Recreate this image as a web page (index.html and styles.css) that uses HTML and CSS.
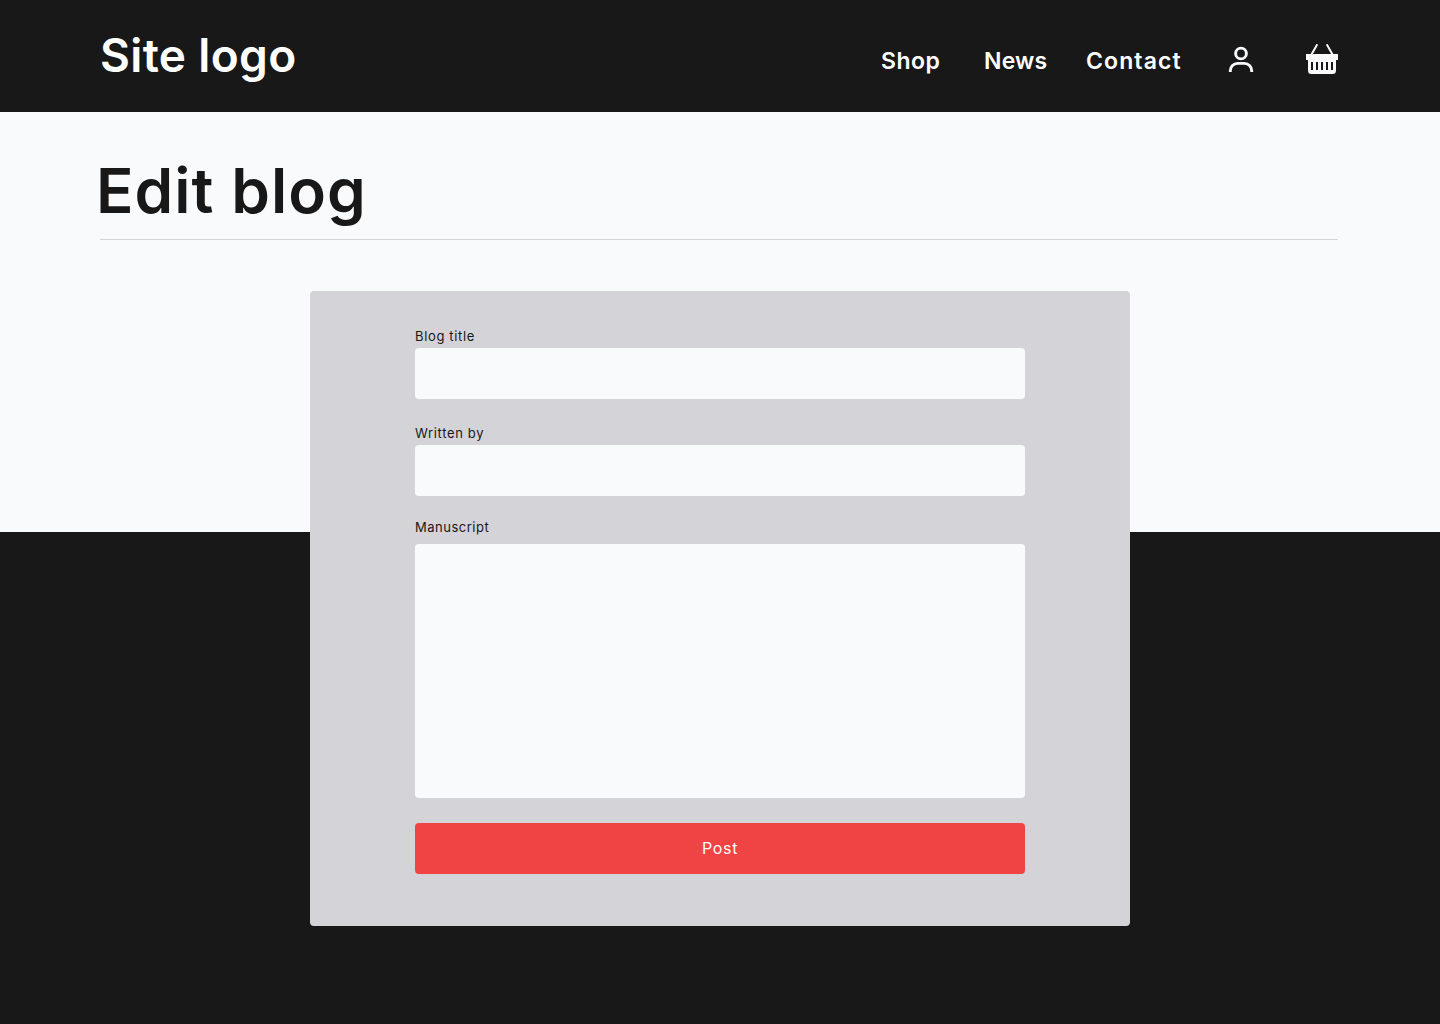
FILE: index.html
```html
<!DOCTYPE html>
<html lang="en">
<head>
<meta charset="utf-8">
<title>Edit blog</title>
<link rel="stylesheet" href="styles.css">
</head>
<body>
<header class="header">
  <a class="logo">Site logo</a>
  <nav class="nav">
    <a class="nav-link shop">Shop</a>
    <a class="nav-link news">News</a>
    <a class="nav-link contact">Contact</a>
    <svg class="icon user" width="26" height="28" viewBox="0 0 26 28" fill="none" stroke="#f9fafc" stroke-width="2.9">
      <circle cx="13" cy="8.5" r="5.4"/>
      <path d="M2.300 27v-1.300a7.300 7.300 0 0 1 7.300-7.300h6.800a7.300 7.300 0 0 1 7.300 7.300V27"/>
    </svg>
    <svg class="icon basket" width="32" height="30" viewBox="0 0 32 30">
      <path d="M11.3.3 5.2 11M20.7.3 26.8 11" fill="none" stroke="#f9fafc" stroke-width="2"/>
      <path d="M0 10h32v6h-2v10.500a3.500 3.500 0 0 1-3.500 3.500h-21A3.500 3.500 0 0 1 2 26.500V16H0z" fill="#f9fafc"/>
      <path d="M6 18v8M11 18v8M16 18v8M21 18v8M26 18v8" stroke="#181818" stroke-width="2"/>
    </svg>
  </nav>
</header>
<main class="main">
  <h1 class="title"><span class="title-text">Edit blog</span></h1>
  <form class="card">
    <label class="label" for="blog-title">Blog title</label>
    <input class="field" id="blog-title" type="text">
    <label class="label author" for="author">Written by</label>
    <input class="field" id="author" type="text">
    <label class="label manuscript" for="manuscript">Manuscript</label>
    <textarea class="field area" id="manuscript"></textarea>
    <button class="post" type="button">Post</button>
  </form>
</main>
</body>
</html>
```
FILE: styles.css
```css
* { box-sizing: border-box; }
body {
  margin: 0;
  height: 1024px;
  overflow: hidden;
  background: linear-gradient(#f9fafc 532px, #181818 532px);
  color: #181818;
  font-family: Inter, "Liberation Sans", sans-serif;
}
.header {
  height: 112px;
  padding: 0 102px 0 100px;
  display: flex;
  justify-content: space-between;
  background: #181818;
  color: #fff;
}
.logo {
  padding-top: 25px;
  font-size: 46px;
  line-height: 60px;
  font-weight: 600;
  letter-spacing: 0.35px;
  white-space: nowrap;
}
.nav { display: flex; }
.nav-link {
  padding-top: 46px;
  font-size: 23px;
  line-height: 30px;
  font-weight: 600;
  white-space: nowrap;
}
.shop { width: 103px; letter-spacing: 0.5px; }
.news { width: 102px; letter-spacing: 0.2px; }
.contact { width: 142px; letter-spacing: 1.1px; }
.icon { flex: none; }
.user { margin: 45px 52px 0 0; }
.basket { margin-top: 44px; }
.main { padding: 0 102px 0 100px; }
.title {
  height: 128px;
  margin: 0;
  padding-top: 40px;
  border-bottom: 1px solid #d4d3d8;
  font-size: 62px;
  line-height: 78px;
  font-weight: 600;
  letter-spacing: 1.05px;
  white-space: nowrap;
}
.title-text { margin-left: -4px; }
.card {
  display: flex;
  flex-direction: column;
  width: 820px;
  height: 635px;
  margin: 51px 0 0 210px;
  padding: 37px 105px 52px;
  border-radius: 4px;
  background: #d4d3d8;
}
.label {
  height: 20px;
  font-size: 13px;
  line-height: 16px;
  letter-spacing: 0.65px;
}
.author { margin-top: 26px; }
.manuscript { height: 25px; margin-top: 23px; letter-spacing: 0.5px; }
.field {
  width: 610px;
  height: 51px;
  padding: 0 14px;
  border: 0;
  border-radius: 4px;
  background: #f9fafc;
  font: inherit;
}
.area { height: 254px; padding: 14px; resize: none; }
.post {
  height: 51px;
  margin-top: 25px;
  padding: 0 0 2px;
  border: 0;
  border-radius: 4px;
  background: #f04444;
  color: #f9fafc;
  font-family: inherit;
  font-size: 16px;
  letter-spacing: 0.7px;
}
```
